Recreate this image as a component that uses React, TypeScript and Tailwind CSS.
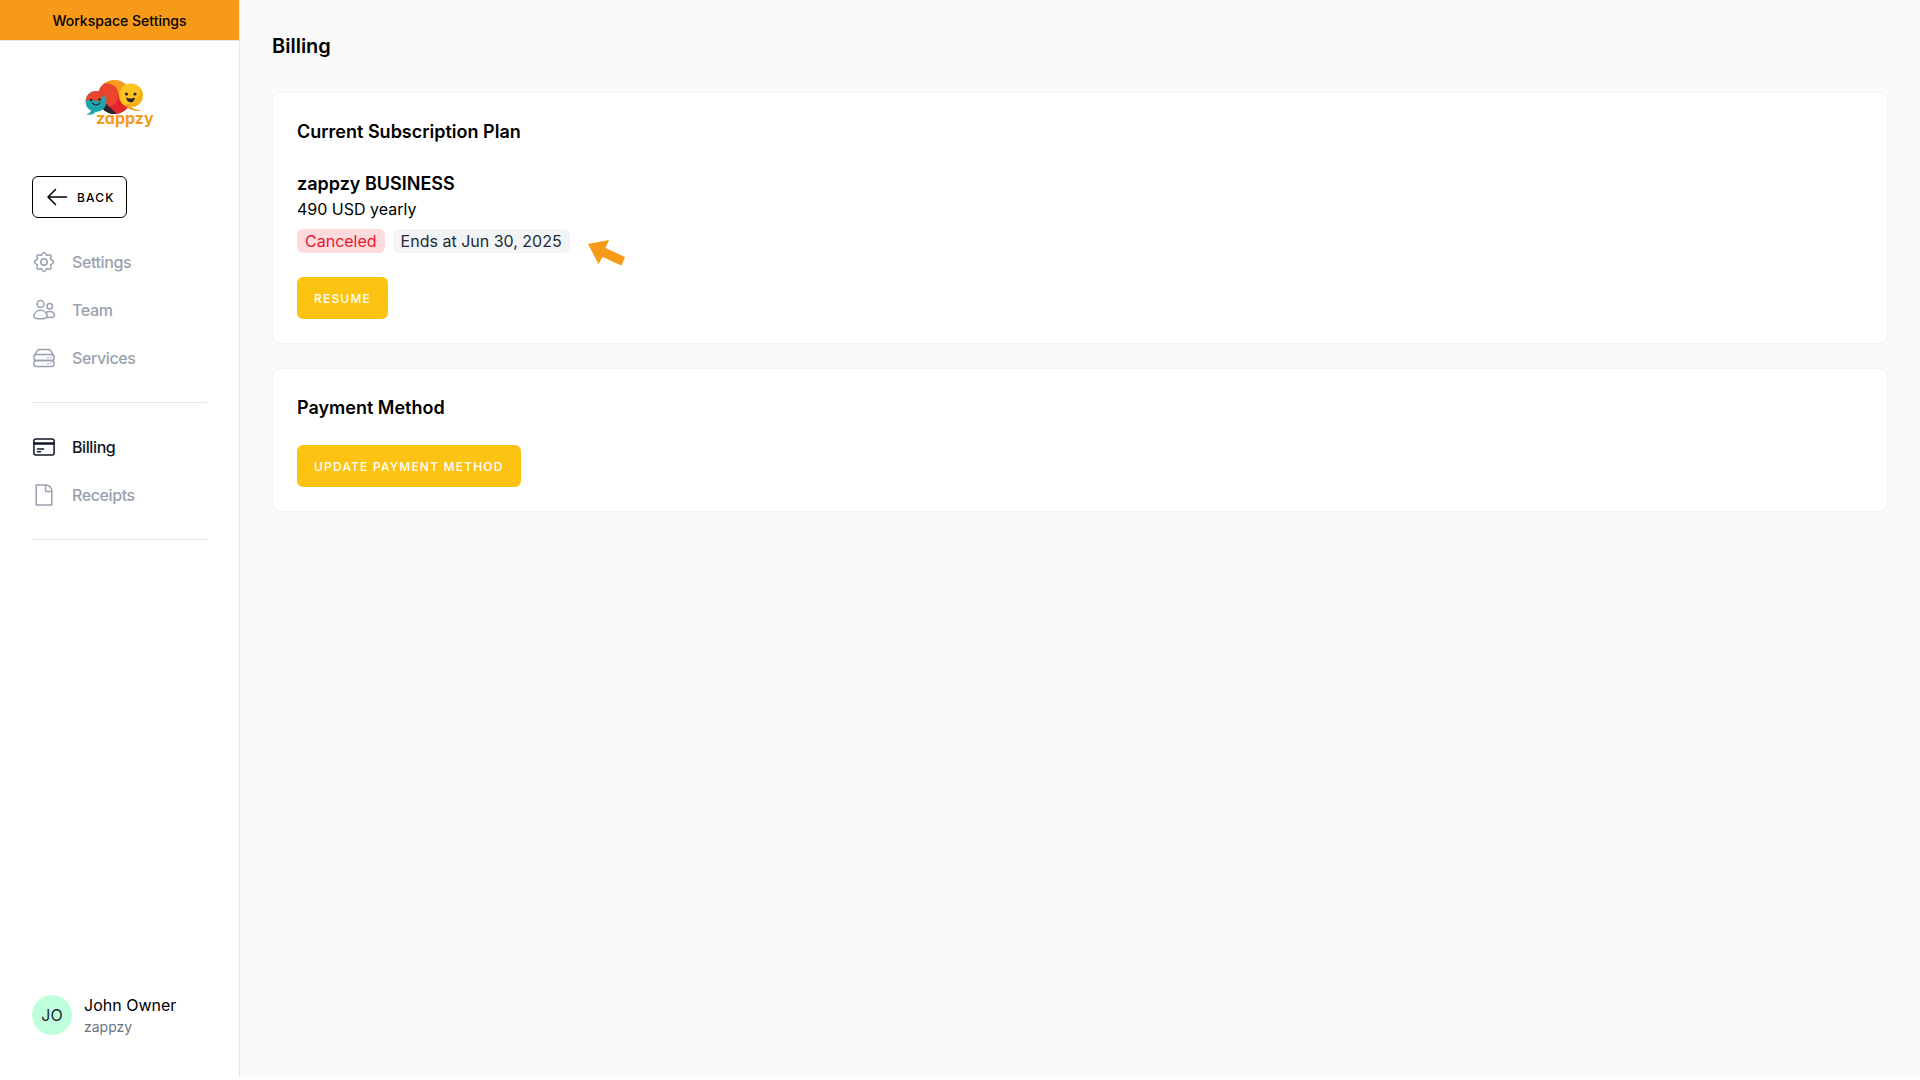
import React from 'react';

type IconProps = { children: React.ReactNode };

const Icon = ({ children }: IconProps) => (
    <svg
        width="24"
        height="24"
        viewBox="0 0 24 24"
        fill="none"
        stroke="currentColor"
        strokeWidth="1.5"
        strokeLinecap="round"
        strokeLinejoin="round"
        aria-hidden="true"
    >
        {children}
    </svg>
);

const gearTeeth = [0, 45, 90, 135, 180, 225, 270, 315];

const SettingsIcon = () => (
    <Icon>
        <circle cx="12" cy="12" r="3.2" />
        {gearTeeth.map((angle) => (
            <path key={angle} d="M9.2 5.2c1.5-.6 1-2.7 2.8-2.7s1.3 2.1 2.8 2.7" transform={`rotate(${angle} 12 12)`} />
        ))}
    </Icon>
);

const TeamIcon = () => (
    <Icon>
        <circle cx="8.5" cy="6" r="3.5" />
        <circle cx="17.7" cy="8.2" r="2.8" />
        <path d="M8.5 12.3c-3.4 0-6.2 2.5-6.7 5.8-.2 2 3 2.7 6.7 2.7s6.9-.7 6.7-2.7c-.5-3.3-3.3-5.8-6.7-5.8z" />
        <path d="M14 14.6c1-.8 2.3-1.2 3.7-1.2 2.5 0 4.5 1.7 4.8 4 .1 1.3-2.2 2.1-4.8 2.1-1 0-1.9 0-2.7-.2" />
    </Icon>
);

const ServicesIcon = () => (
    <Icon>
        <rect x="2" y="8.5" width="20" height="6" rx="2.5" />
        <rect x="2" y="14.5" width="20" height="6" rx="2.5" />
        <path d="M2.5 9.6 5 5c.6-1 1.2-1.5 2.3-1.5h9.4c1.1 0 1.7.5 2.3 1.5l2.5 4.6" />
        <path d="M15.9 11.7h.1M18.9 11.2h.1M15.9 17.7h.1M18.9 17.2h.1" />
    </Icon>
);

const BillingIcon = () => (
    <Icon>
        <rect x="1.9" y="4" width="20.2" height="16" rx="2" />
        <path d="M2 7.9h20M2 9h20M5.5 13.9h6M5.5 16.7h3" />
    </Icon>
);

const ReceiptsIcon = () => (
    <Icon>
        <path d="M4.2 2h10.6c3 1 5 3.5 5 6.5V22H4.2z" />
        <path d="M13.5 2v5.3c0 .7.4 1.2 1.2 1.2h5.1" />
    </Icon>
);

const Logo = () => (
    <svg width="70" height="48" viewBox="0 0 70 48" role="img" aria-label="zappzy">
        <defs>
            <clipPath id="big">
                <circle cx="29.5" cy="17" r="17" />
            </clipPath>
            <clipPath id="small">
                <circle cx="11" cy="21.5" r="10.5" />
            </clipPath>
        </defs>
        <g clipPath="url(#big)">
            <rect x="10" width="40" height="36" fill="#f59a1b" />
            <path d="M18 20L26 36H50V24C42 24 34 20 33 12z" fill="#e2242c" />
            <path d="M10 26V6C20 0 34 4 33 14c0 8-4 12-10 13z" fill="#e8452c" />
            <path d="M18 20c4 6 10 9 14 15H10z" fill="#29252d" />
        </g>
        <circle cx="46" cy="15.5" r="12" fill="#fcc41c" />
        <path d="M56 9c3 6 1 14-5 17l-12-1c8 0 14-4 17-16z" fill="#f9ac1b" />
        <path d="M44 24c2 4 6 6 13 6-4 2-12 1-17-5z" fill="#f59a1b" />
        <circle cx="41.5" cy="14" r="1.6" fill="#29252d" />
        <circle cx="50" cy="14" r="1.6" fill="#29252d" />
        <path d="M41 17.5c3 1.2 6 1.2 9 0-.4 6.5-8 6.5-9 0z" fill="#29252d" />
        <g clipPath="url(#small)">
            <rect y="10" width="24" height="24" fill="#1fa5ad" />
            <path d="M0 10h24v7c-4-2-7-1-8 2-2 3-6 2-8 1-3-1-6 0-8 2z" fill="#e8452c" />
        </g>
        <path d="M6 30c0 2-2 4-5 4.5 4 1 9 0 10-4z" fill="#1fa5ad" />
        <circle cx="6" cy="20" r="1.3" fill="#29252d" />
        <circle cx="14.5" cy="19.5" r="1.3" fill="#29252d" />
        <path d="M7.5 23c2 3 6 2.5 7.5-.5" fill="none" stroke="#29252d" strokeWidth="1.2" strokeLinecap="round" />
        <text x="11" y="44" fill="#f59a1b" fontSize="16" className="font-bold [font-feature-settings:'cv11']">
            zappzy
        </text>
    </svg>
);

const NavItem = ({ icon, label, active }: { icon: React.ReactNode; label: string; active?: boolean }) => (
    <a
        href="#"
        aria-current={active ? 'page' : undefined}
        className={`flex h-12 items-center gap-4 text-base font-medium tracking-tight ${active ? 'text-gray-900' : 'text-gray-400'}`}
    >
        {icon}
        {label}
    </a>
);

const PrimaryButton = ({ children }: { children: React.ReactNode }) => (
    <button
        type="button"
        className="h-[42px] rounded-md bg-[#fdc313] px-[17px] pt-0.5 text-xs font-medium tracking-widest text-white uppercase"
    >
        {children}
    </button>
);

const Sidebar = () => (
    <aside className="flex w-60 shrink-0 flex-col border-r border-gray-200 bg-white">
        <div className="flex h-[41px] items-center justify-center border-b border-gray-200 bg-[#f79a17] pt-0.5 text-sm font-medium">
            Workspace Settings
        </div>

        <div className="mt-[39px] flex justify-center">
            <Logo />
        </div>

        <div className="mt-12 px-8">
            <button
                type="button"
                className="flex h-[42px] items-center gap-2 rounded-md border border-black pr-[11px] pl-3 text-xs font-medium tracking-widest uppercase"
            >
                <Icon>
                    <path d="M21.5 12H3M10.5 4.5 3 12l7.5 7.5" />
                </Icon>
                <span className="pt-0.5">Back</span>
            </button>
        </div>

        <nav className="mt-5 px-8">
            <div className="border-b border-gray-200 pb-5">
                <NavItem icon={<SettingsIcon />} label="Settings" />
                <NavItem icon={<TeamIcon />} label="Team" />
                <NavItem icon={<ServicesIcon />} label="Services" />
            </div>
            <div className="border-b border-gray-200 py-5">
                <NavItem icon={<BillingIcon />} label="Billing" active />
                <NavItem icon={<ReceiptsIcon />} label="Receipts" />
            </div>
        </nav>

        <div className="mt-auto flex items-center gap-3 px-8 pb-10">
            <div className="flex size-10 items-center justify-center rounded-full bg-[#c0ffdc] text-base text-gray-800">
                JO
            </div>
            <div>
                <div className="text-base leading-6">John Owner</div>
                <div className="text-sm leading-5 text-gray-500">zappzy</div>
            </div>
        </div>
    </aside>
);

export default function App() {
    return (
        <div className="flex min-h-screen border-b-3 border-white bg-[#fafafa] font-[Inter,sans-serif] text-black">
            <Sidebar />

            <main className="flex-1 p-8">
                <h1 className="text-xl leading-7 font-semibold">Billing</h1>

                {/* Current plan */}
                <section className="mt-8 rounded-lg border border-gray-100 bg-white p-6">
                    <h2 className="text-lg leading-[30px] font-semibold">Current Subscription Plan</h2>
                    <h3 className="mt-[22px] text-lg leading-[30px] font-semibold">zappzy BUSINESS</h3>
                    <p className="text-base leading-5">490 USD yearly</p>
                    <div className="mt-[10px] flex items-start gap-2">
                        <span className="rounded-md bg-[#fddadd] px-2 text-base leading-6 text-[#e8192c]">Canceled</span>
                        <div className="relative">
                            <span className="block rounded-md bg-gray-100 px-2 text-base leading-6 text-gray-800">
                                Ends at Jun 30, 2025
                            </span>
                            <svg
                                className="absolute top-[10px] left-full ml-[17px]"
                                width="40"
                                height="28"
                                viewBox="0 0 40 28"
                                fill="#f79a17"
                                aria-hidden="true"
                            >
                                <path d="M1 5 22 1l-3.5 8L38 18l-3.5 8.5L15.5 18 11.5 25z" />
                            </svg>
                        </div>
                    </div>
                    <div className="mt-6">
                        <PrimaryButton>Resume</PrimaryButton>
                    </div>
                </section>

                {/* Payment method */}
                <section className="mt-6 rounded-lg border border-gray-100 bg-white p-6">
                    <h2 className="text-lg leading-[30px] font-semibold">Payment Method</h2>
                    <div className="mt-[22px]">
                        <PrimaryButton>Update Payment Method</PrimaryButton>
                    </div>
                </section>
            </main>
        </div>
    );
}
